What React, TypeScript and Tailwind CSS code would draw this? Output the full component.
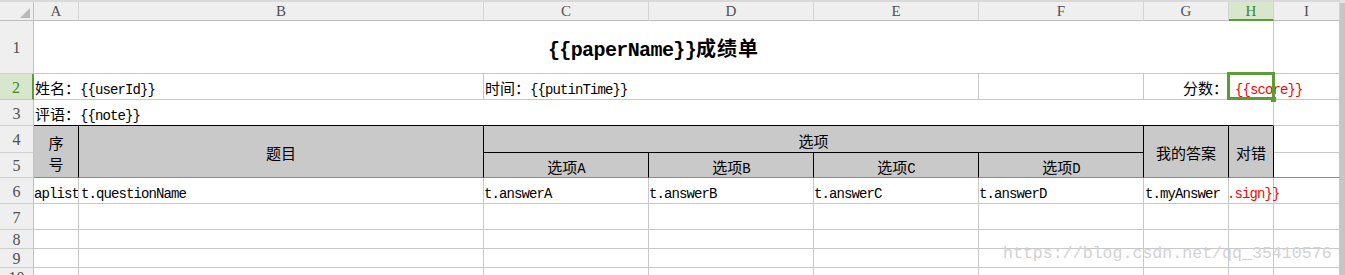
import React from "react";

const CJK_RE = /([\u3000-\u303f\u4e00-\u9fff\uff00-\uffef]+)/;

function Mixed({ text, cjk, lat }: { text: string; cjk: string; lat: string }) {
  const parts = text.split(CJK_RE).filter((p) => p.length > 0);
  return (
    <span className="whitespace-nowrap leading-none">
      {parts.map((p, i) =>
        CJK_RE.test(p) ? (
          <span key={i} className={cjk}>
            {p}
          </span>
        ) : (
          <span key={i} className={lat}>
            {p}
          </span>
        )
      )}
    </span>
  );
}

const BODY_CJK = "font-['Noto_Sans_CJK_SC',sans-serif] text-[15px]";
const BODY_LAT = "font-['Liberation_Mono',monospace] text-[14px] tracking-[-0.9px]";

function T({ text, red = false }: { text: string; red?: boolean }) {
  return (
    <span className={red ? "text-[#ff0000]" : "text-black"}>
      <Mixed text={text} cjk={BODY_CJK} lat={BODY_LAT} />
    </span>
  );
}

function C({
  pos,
  r = "border-r-[#c8c8c8]",
  b = "border-b-[#c8c8c8]",
  extra = "",
  children,
}: {
  pos: string;
  r?: string;
  b?: string;
  extra?: string;
  children?: React.ReactNode;
}) {
  return (
    <div className={`flex min-w-0 border-r border-b ${r} ${b} ${pos} ${extra}`}>
      {children}
    </div>
  );
}

const colHeads = [
  { l: "A", c: "col-start-2" },
  { l: "B", c: "col-start-3" },
  { l: "C", c: "col-start-4" },
  { l: "D", c: "col-start-5" },
  { l: "E", c: "col-start-6" },
  { l: "F", c: "col-start-7" },
  { l: "G", c: "col-start-8" },
  { l: "H", c: "col-start-9", sel: true },
  { l: "I", c: "col-start-10" },
];

const rowHeads = [
  { n: "1", r: "row-start-3" },
  { n: "2", r: "row-start-4", sel: true },
  { n: "3", r: "row-start-5" },
  { n: "4", r: "row-start-6" },
  { n: "5", r: "row-start-7" },
  { n: "6", r: "row-start-8" },
  { n: "7", r: "row-start-9" },
  { n: "8", r: "row-start-10" },
  { n: "9", r: "row-start-11" },
  { n: "10", r: "row-start-12" },
];

const allCols = [
  "col-start-2",
  "col-start-3",
  "col-start-4",
  "col-start-5",
  "col-start-6",
  "col-start-7",
  "col-start-8",
  "col-start-9",
  "col-start-10",
];
const emptyRows = ["row-start-9", "row-start-10", "row-start-11", "row-start-12"];

const HEAD = "bg-[#c9c9c9] items-center justify-center pt-[3px]";
const HEADFONT = "font-['Liberation_Serif',serif]";

export default function App() {
  return (
    <div className="relative h-[275px] w-[1345px] overflow-hidden bg-white grid grid-cols-[34px_45px_405px_165px_165px_165px_165px_85px_45px_66px_5px] grid-rows-[2px_19px_53px_26px_26px_27px_25px_26px_26px_19px_19px_19px]">
      {/* top strip */}
      <div className="col-start-1 col-span-10 row-start-1 bg-[#d9d9d9]" />
      {/* scrollbar */}
      <div className="col-start-11 row-start-1 row-span-12 flex flex-col bg-[#c6c6c6]">
        <div className="h-[3px] bg-[#e4e4e4]" />
      </div>

      {/* corner */}
      <div className="col-start-1 row-start-2 flex items-end justify-end bg-[#efefef] border-r border-b border-r-[#c0c0c0] border-b-[#bdbdbd] pr-[3px] pb-[2px]">
        <svg width="10" height="10" viewBox="0 0 10 10">
          <polygon points="10,0 10,10 0,10" fill="#b9b9b9" />
        </svg>
      </div>

      {/* column headers */}
      {colHeads.map((h) =>
        h.sel ? (
          <div
            key={h.l}
            className={`${h.c} row-start-2 flex items-center justify-center bg-[#d7e6cd] border-r border-b-2 border-r-[#d4d4d4] border-b-[#5b9d35] text-[#3b8b1e] ${HEADFONT} text-[15px] leading-none pt-[1px]`}
          >
            {h.l}
          </div>
        ) : (
          <div
            key={h.l}
            className={`${h.c} row-start-2 flex items-center justify-center bg-[#efefef] border-r border-b border-r-[#d4d4d4] border-b-[#bdbdbd] text-[#505050] ${HEADFONT} text-[15px] leading-none pt-[1px]`}
          >
            {h.l}
          </div>
        )
      )}

      {/* row headers */}
      {rowHeads.map((h) =>
        h.sel ? (
          <div
            key={h.n}
            className={`col-start-1 ${h.r} flex items-center justify-center bg-[#d7e6cd] border-r-2 border-b border-r-[#5b9d35] border-b-[#c8c8c8] text-[#3b8b1e] ${HEADFONT} text-[16px] leading-none pt-[2px]`}
          >
            {h.n}
          </div>
        ) : (
          <div
            key={h.n}
            className={`col-start-1 ${h.r} flex items-center justify-center bg-[#efefef] border-r border-b border-r-[#c0c0c0] border-b-[#cfcfcf] text-[#505050] ${HEADFONT} text-[16px] leading-none pt-[2px]`}
          >
            {h.n}
          </div>
        )
      )}

      {/* row 1: title */}
      <C pos="col-start-2 col-span-8 row-start-3" extra="items-center justify-center pt-[6px]">
        <span className="text-black">
          <Mixed
            text="{{paperName}}成绩单"
            cjk="font-['Noto_Sans_CJK_SC',sans-serif] text-[20px] font-bold tracking-[1px]"
            lat="font-['Liberation_Mono',monospace] text-[20px] font-bold tracking-[-0.6px]"
          />
        </span>
      </C>
      <C pos="col-start-10 row-start-3" />

      {/* row 2 */}
      <C pos="col-start-2 col-span-2 row-start-4" extra="items-center pl-[1px] pt-[3px]">
        <T text="姓名：{{userId}}" />
      </C>
      <C pos="col-start-4 col-span-3 row-start-4" extra="items-center pl-[1px] pt-[3px]">
        <T text="时间：{{putinTime}}" />
      </C>
      <C pos="col-start-7 row-start-4" />
      <C pos="col-start-8 row-start-4" extra="items-center justify-end pt-[3px]">
        <T text="分数：" />
      </C>
      <C pos="col-start-9 row-start-4" extra="relative items-center pl-[6px] pt-[3px]">
        <T text="{{score}}" red />
        <div className="absolute left-[-2px] top-[-2px] z-10 h-[28px] w-[48px] border-[3px] border-[#5b9d35]" />
        <div className="absolute left-[42px] top-[23px] z-10 h-[5px] w-[5px] bg-[#5b9d35]" />
      </C>
      <C pos="col-start-10 row-start-4" />

      {/* row 3 */}
      <C
        pos="col-start-2 col-span-8 row-start-5"
        b="border-b-black"
        extra="items-center pl-[1px] pt-[3px]"
      >
        <T text="评语：{{note}}" />
      </C>
      <C pos="col-start-10 row-start-5" />

      {/* rows 4-5: table header */}
      <C
        pos="col-start-2 row-start-6 row-span-2"
        r="border-r-black"
        b="border-b-[#6aa84f]"
        extra="bg-[#c9c9c9] flex-col items-center justify-center pt-[2px]"
      >
        <span className={`${BODY_CJK} leading-[21px] text-black`}>序</span>
        <span className={`${BODY_CJK} leading-[21px] text-black`}>号</span>
      </C>
      <C pos="col-start-3 row-start-6 row-span-2" r="border-r-black" b="border-b-[#6aa84f]" extra={HEAD}>
        <T text="题目" />
      </C>
      <C pos="col-start-4 col-span-4 row-start-6" r="border-r-black" b="border-b-black" extra={HEAD}>
        <T text="选项" />
      </C>
      <C pos="col-start-4 row-start-7" r="border-r-black" b="border-b-[#6aa84f]" extra={HEAD}>
        <T text="选项A" />
      </C>
      <C pos="col-start-5 row-start-7" r="border-r-black" b="border-b-[#6aa84f]" extra={HEAD}>
        <T text="选项B" />
      </C>
      <C pos="col-start-6 row-start-7" r="border-r-black" b="border-b-[#6aa84f]" extra={HEAD}>
        <T text="选项C" />
      </C>
      <C pos="col-start-7 row-start-7" r="border-r-black" b="border-b-[#6aa84f]" extra={HEAD}>
        <T text="选项D" />
      </C>
      <C pos="col-start-8 row-start-6 row-span-2" r="border-r-black" b="border-b-[#6aa84f]" extra={HEAD}>
        <T text="我的答案" />
      </C>
      <C pos="col-start-9 row-start-6 row-span-2" r="border-r-black" b="border-b-[#6aa84f]" extra={HEAD}>
        <T text="对错" />
      </C>
      <C pos="col-start-10 row-start-6" />
      <C pos="col-start-10 row-start-7" b="border-b-[#6aa84f]" />

      {/* row 6 */}
      <C pos="col-start-2 row-start-8" extra="items-center overflow-hidden pt-[3px]">
        <T text="aplist" />
      </C>
      <C pos="col-start-3 row-start-8" extra="items-center pl-[2px] pt-[3px]">
        <T text="t.questionName" />
      </C>
      <C pos="col-start-4 row-start-8" extra="items-center pt-[3px]">
        <T text="t.answerA" />
      </C>
      <C pos="col-start-5 row-start-8" extra="items-center pt-[3px]">
        <T text="t.answerB" />
      </C>
      <C pos="col-start-6 row-start-8" extra="items-center pt-[3px]">
        <T text="t.answerC" />
      </C>
      <C pos="col-start-7 row-start-8" extra="items-center pt-[3px]">
        <T text="t.answerD" />
      </C>
      <C pos="col-start-8 row-start-8" extra="items-center pl-[1px] pt-[3px]">
        <T text="t.myAnswer" />
      </C>
      <C pos="col-start-9 row-start-8" extra="items-center pt-[3px]">
        <span className="ml-[-2px]">
          <T text=".sign}}" red />
        </span>
      </C>
      <C pos="col-start-10 row-start-8" />

      {/* rows 7-10 */}
      {emptyRows.map((r) => allCols.map((c) => <C key={r + c} pos={`${c} ${r}`} />))}

      {/* watermark */}
      <div className="pointer-events-none absolute left-[1003px] top-[246px] whitespace-nowrap font-['Liberation_Mono',monospace] text-[16.6px] leading-none text-[#d2d2d2]">
        https://blog.csdn.net/qq_35410576
      </div>
    </div>
  );
}
